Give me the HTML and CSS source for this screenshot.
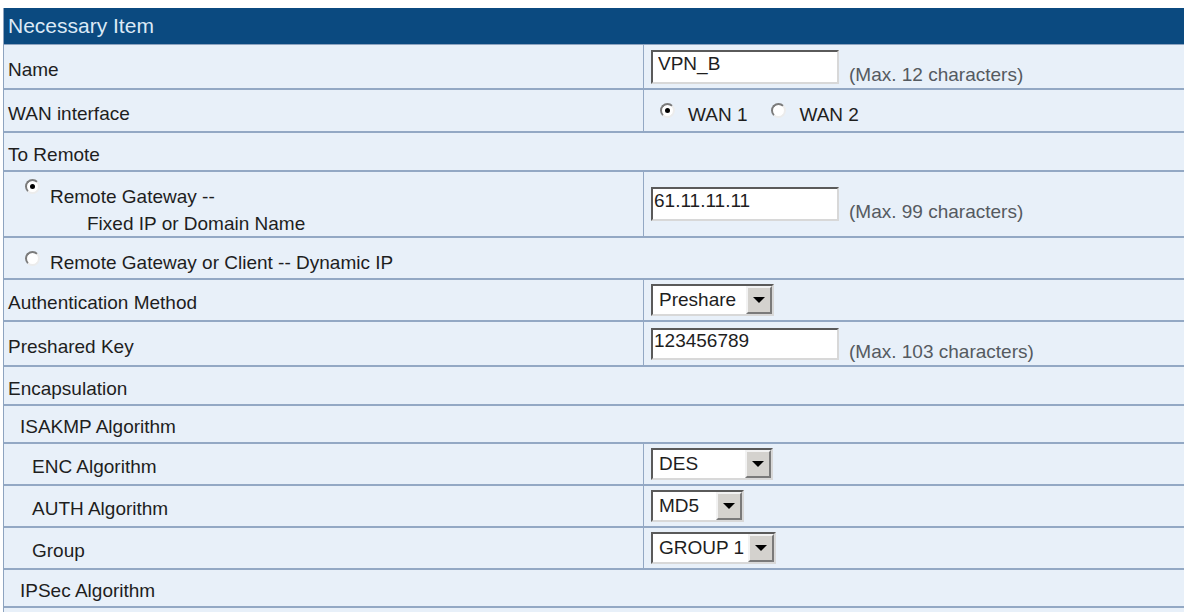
FILE: index.html
```html
<!DOCTYPE html>
<html lang="en">
<head>
<meta charset="utf-8">
<title>Necessary Item</title>
<link rel="stylesheet" href="styles.css">
</head>
<body>
<div class="panel">
  <div class="head">Necessary Item</div>

  <div class="row h45">
    <div class="label">Name</div>
    <div class="value">
      <input class="field" type="text" value="VPN_B">
      <span class="note">(Max. 12 characters)</span>
    </div>
  </div>

  <div class="row h43">
    <div class="label">WAN interface</div>
    <div class="value">
      <span class="opt first"><span class="radio checked"></span><span class="opt-text">WAN 1</span></span>
      <span class="opt second"><span class="radio"></span><span class="opt-text">WAN 2</span></span>
    </div>
  </div>

  <div class="row h39 full">
    <div class="label">To Remote</div>
  </div>

  <div class="row h66">
    <div class="label rg">
      <div class="rg-line"><span class="radio checked"></span><span class="rg-text">Remote Gateway --</span></div>
      <div class="rg-sub">Fixed IP or Domain Name</div>
    </div>
    <div class="value">
      <input class="field flush" type="text" value="61.11.11.11">
      <span class="note">(Max. 99 characters)</span>
    </div>
  </div>

  <div class="row h42 full">
    <div class="label">
      <span class="opt indent"><span class="radio"></span><span class="opt-text">Remote Gateway or Client -- Dynamic IP</span></span>
    </div>
  </div>

  <div class="row h42">
    <div class="label">Authentication Method</div>
    <div class="value">
      <span class="select w-preshare"><span class="sel-text">Preshare</span><span class="sel-btn"><span class="arrow"></span></span></span>
    </div>
  </div>

  <div class="row h45">
    <div class="label">Preshared Key</div>
    <div class="value">
      <input class="field flush short" type="text" value="123456789">
      <span class="note">(Max. 103 characters)</span>
    </div>
  </div>

  <div class="row h39 full">
    <div class="label">Encapsulation</div>
  </div>

  <div class="row h38 full">
    <div class="label lvl1">ISAKMP Algorithm</div>
  </div>

  <div class="row h42">
    <div class="label lvl2">ENC Algorithm</div>
    <div class="value">
      <span class="select w-des"><span class="sel-text">DES</span><span class="sel-btn"><span class="arrow"></span></span></span>
    </div>
  </div>

  <div class="row h42">
    <div class="label lvl2">AUTH Algorithm</div>
    <div class="value">
      <span class="select w-md5"><span class="sel-text">MD5</span><span class="sel-btn"><span class="arrow"></span></span></span>
    </div>
  </div>

  <div class="row h42">
    <div class="label lvl2">Group</div>
    <div class="value">
      <span class="select w-group"><span class="sel-text">GROUP 1</span><span class="sel-btn"><span class="arrow"></span></span></span>
    </div>
  </div>

  <div class="row h38 full">
    <div class="label lvl1">IPSec Algorithm</div>
  </div>

  <div class="tail"></div>
</div>
</body>
</html>
```

FILE: styles.css
```css
html, body {
  margin: 0;
  padding: 0;
  background: #ffffff;
  overflow: hidden;
}

body {
  font-family: "Liberation Sans", Arial, sans-serif;
  font-size: 19px;
  color: #1e1e1e;
}

.panel {
  margin: 8px 0 0 3px;
  border-left: 1px solid #8ea4c0;
  background: #e8f0f9;
}

.head {
  height: 37px;
  box-sizing: border-box;
  background: #0b4a80;
  color: #dce9f6;
  font-size: 21px;
  display: flex;
  align-items: center;
  padding-left: 4px;
  border-bottom: 1px solid #8ea4c0;
}

.row {
  display: flex;
  box-sizing: border-box;
  border-bottom: 2px solid #93a8c4;
  background: #e8f0f9;
}

.tail {
  height: 10px;
  background: #e8f0f9;
}

.h38 { height: 38px; }
.h39 { height: 39px; }
.h42 { height: 42px; }
.h43 { height: 43px; }
.h45 { height: 45px; }
.h66 { height: 66px; }

.label {
  width: 640px;
  flex: none;
  box-sizing: border-box;
  border-right: 1px solid #93a8c4;
  padding: 6px 0 0 4px;
  display: flex;
  align-items: center;
}

.full .label {
  width: auto;
  flex: 1;
  border-right: 0;
}

.lvl1 { padding-left: 16px; }
.lvl2 { padding-left: 28px; }

.value {
  flex: 1;
  display: flex;
  align-items: center;
  padding-left: 7px;
}

.field {
  width: 188px;
  height: 34px;
  box-sizing: border-box;
  margin: 0;
  padding: 0 0 6px 5px;
  border: 2px solid;
  border-color: #5a5a5a #d8d8d8 #d8d8d8 #5a5a5a;
  background: #ffffff;
  font-family: "Liberation Sans", Arial, sans-serif;
  font-size: 19px;
  color: #1e1e1e;
  outline: none;
}

.field.flush { padding-left: 1px; }
.field.short { height: 32px; }

.note {
  margin: 16px 0 0 10px;
  color: #555a60;
}

/* radios */
.opt {
  display: inline-flex;
  align-items: center;
}

.opt.first { margin-left: 9px; }
.opt.second { margin-left: 24px; }
.opt.indent { margin-left: 17px; margin-top: -6px; }

.opt-text {
  margin-left: 13px;
  padding-top: 9px;
}

.opt.indent .opt-text { margin-left: 10px; }

.radio {
  width: 15px;
  height: 15px;
  flex: none;
  box-sizing: border-box;
  border-radius: 50%;
  background: #ffffff;
  border: 2px solid;
  border-color: #7b7b7b #ececec #ececec #7b7b7b;
  display: inline-flex;
  align-items: center;
  justify-content: center;
}

.radio.checked::after {
  content: "";
  width: 5px;
  height: 5px;
  border-radius: 50%;
  background: #000000;
}

/* remote gateway two-line label */
.label.rg {
  flex-direction: column;
  align-items: flex-start;
  justify-content: center;
  padding-top: 12px;
}

.rg-line {
  display: flex;
  align-items: flex-start;
  line-height: 27px;
  padding-left: 17px;
}

.rg-line .radio { margin-top: -4px; }

.rg-text { margin-left: 10px; }

.rg-sub {
  line-height: 27px;
  padding-left: 79px;
}

/* select boxes */
.select {
  display: inline-flex;
  height: 32px;
  box-sizing: border-box;
  border: 2px solid;
  border-color: #5a5a5a #d8d8d8 #d8d8d8 #5a5a5a;
  background: #ffffff;
}

.w-preshare { width: 123px; }
.w-des { width: 122px; }
.w-md5 { width: 93px; }
.w-group { width: 125px; }

.sel-text {
  flex: 1;
  padding-left: 6px;
  display: flex;
  align-items: center;
  white-space: nowrap;
  overflow: hidden;
}

.sel-btn {
  width: 26px;
  flex: none;
  box-sizing: border-box;
  background: #d4d2ce;
  border: 2px solid;
  border-color: #f2f2f2 #7a7a7a #7a7a7a #f2f2f2;
  display: flex;
  align-items: center;
  justify-content: center;
}

.arrow {
  width: 0;
  height: 0;
  border-left: 6px solid transparent;
  border-right: 6px solid transparent;
  border-top: 6px solid #000000;
}
```
